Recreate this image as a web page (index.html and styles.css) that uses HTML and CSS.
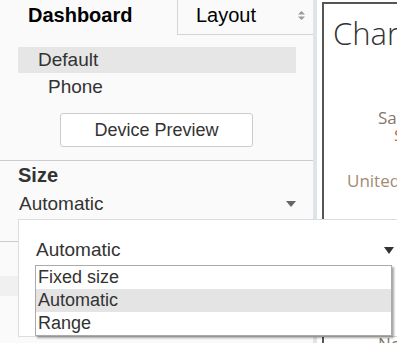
FILE: index.html
```html
<!DOCTYPE html>
<html lang="en">
<head>
    <meta charset="UTF-8">
    <meta name="viewport" content="width=device-width, initial-scale=1.0">
    <title>Dashboard layout</title>
    <link rel="stylesheet" href="styles.css">
</head>
<body>
    <div class="side">
        <div class="tabs">
            <div class="tab tab-active">Dashboard</div>
            <div class="tab tab-other">
                <span>Layout</span>
                <svg class="updown" width="7" height="9" viewBox="0 0 7 9">
                    <path d="M0 3.5 L3.5 0 L7 3.5 Z M0 5.5 L3.5 9 L7 5.5 Z" fill="#9a9a9a"/>
                </svg>
            </div>
        </div>

        <div class="devices">
            <div class="device device-default">Default</div>
            <div class="device device-phone">Phone</div>
        </div>

        <button class="preview-btn">Device Preview</button>

        <div class="size">
            <div class="size-title">Size</div>
            <div class="size-value">
                <span>Automatic</span>
                <svg width="10" height="6" viewBox="0 0 10 6"><path d="M0 0 H10 L5 6 Z" fill="#666"/></svg>
            </div>
        </div>

        <div class="next-section">
            <div class="next-row"></div>
        </div>
    </div>

    <div class="strip"></div>
    <div class="gap"></div>

    <div class="canvas">
        <div class="chart-title">Chart</div>
        <div class="mark mark-so">Sales</div>
        <div class="mark mark-s">$</div>
        <div class="mark mark-united">United States</div>
        <div class="mark mark-nc">North</div>
    </div>

    <!-- выпадающее меню размера -->
    <div class="popup">
        <div class="popup-select">
            <span>Automatic</span>
            <svg width="10" height="7" viewBox="0 0 10 7"><path d="M0 0 H10 L5 7 Z" fill="#333"/></svg>
        </div>
        <div class="listbox">
            <div class="option">Fixed size</div>
            <div class="option option-selected">Automatic</div>
            <div class="option">Range</div>
        </div>
    </div>
</body>
</html>
```

FILE: styles.css
```css
body {
    margin: 0;
    width: 397px;
    height: 343px;
    overflow: hidden;
    position: relative;
    display: flex;
    font-family: "Liberation Sans", Arial, sans-serif;
    color: #333;
    background-color: #fff;
}
.side {
    width: 313px;
    flex: none;
    background-color: #fafafa;
}
.tabs {
    display: flex;
    height: 35px;
}
.tab {
    font-size: 20px;
    line-height: 30px;
    color: #000;
}
.tab-active {
    width: 177px;
    padding-left: 28px;
    box-sizing: border-box;
    font-weight: bold;
}
.tab-other {
    flex: 1;
    display: flex;
    justify-content: space-between;
    padding-left: 18px;
    padding-right: 8px;
    border-left: 1px solid #d4d4d4;
    border-bottom: 1px solid #d4d4d4;
}
.updown {
    margin-top: 11px;
}
.devices {
    margin-top: 12px;
}
.device {
    margin-left: 18px;
    width: 278px;
    font-size: 19px;
    height: 26px;
    line-height: 26px;
    box-sizing: border-box;
}
.device-default {
    background-color: #e6e6e6;
    padding-left: 20px;
}
.device-phone {
    height: 27px;
    line-height: 27px;
    padding-left: 30px;
}
.preview-btn {
    display: block;
    margin: 13px 0 13px 60px;
    width: 193px;
    height: 34px;
    background-color: #fff;
    border: 1px solid #ccc;
    border-radius: 3px;
    font-family: "Liberation Sans", Arial, sans-serif;
    font-size: 18px;
    color: #333;
    padding: 0;
}
.size {
    border-top: 1px solid #ccc;
    padding-left: 18px;
    padding-right: 17px;
}
.size-title {
    font-size: 20px;
    font-weight: bold;
    line-height: 22px;
    padding-top: 3px;
}
.size-value {
    margin-top: 5px;
    display: flex;
    justify-content: space-between;
    align-items: center;
    font-size: 19px;
    line-height: 26px;
    padding-left: 1px;
}
.next-section {
    margin-top: 24px;
    border-top: 1px solid #ccc;
}
.next-row {
    margin-top: 34px;
    height: 20px;
    background-color: #f0f0f0;
}
.strip {
    width: 4px;
    flex: none;
    background-color: #dfe4e9;
}
.gap {
    width: 5px;
    flex: none;
}
.canvas {
    flex: 1;
    margin-top: 2px;
    border-left: 2px solid #555;
    border-top: 2px solid #555;
    padding-left: 9px;
    font-family: "Open Sans", sans-serif;
    white-space: nowrap;
    overflow: hidden;
}
.chart-title {
    font-size: 31px;
    font-weight: 300;
    line-height: 42px;
    padding-top: 8px;
    color: #333;
}
.mark {
    font-size: 17px;
    line-height: 17px;
}
.mark-so {
    margin-top: 55px;
    padding-left: 45px;
    color: #85776c;
}
.mark-s {
    margin-top: 0;
    padding-left: 61px;
    color: #c8632f;
}
.mark-united {
    margin-top: 29px;
    padding-left: 14px;
    color: #a38a70;
}
.mark-nc {
    margin-top: 146px;
    padding-left: 45px;
    color: #85776c;
}
.popup {
    position: absolute;
    left: 18px;
    top: 219px;
    right: -2px;
    padding-top: 17px;
    padding-left: 17px;
    background-color: #fff;
    border: 1px solid #ddd;
}
.popup-select {
    width: 358px;
    display: flex;
    justify-content: space-between;
    align-items: center;
    font-size: 19px;
    line-height: 26px;
}
.listbox {
    margin-top: 2px;
    margin-left: -1px;
    width: 357px;
    box-sizing: border-box;
    border: 1px solid #aaa;
    background-color: #fff;
    box-shadow: 2px 2px 2px rgba(0, 0, 0, 0.35);
}
.option {
    font-size: 18px;
    height: 23px;
    line-height: 23px;
    padding-left: 2px;
}
.option-selected {
    background-color: #e4e4e4;
}
```
